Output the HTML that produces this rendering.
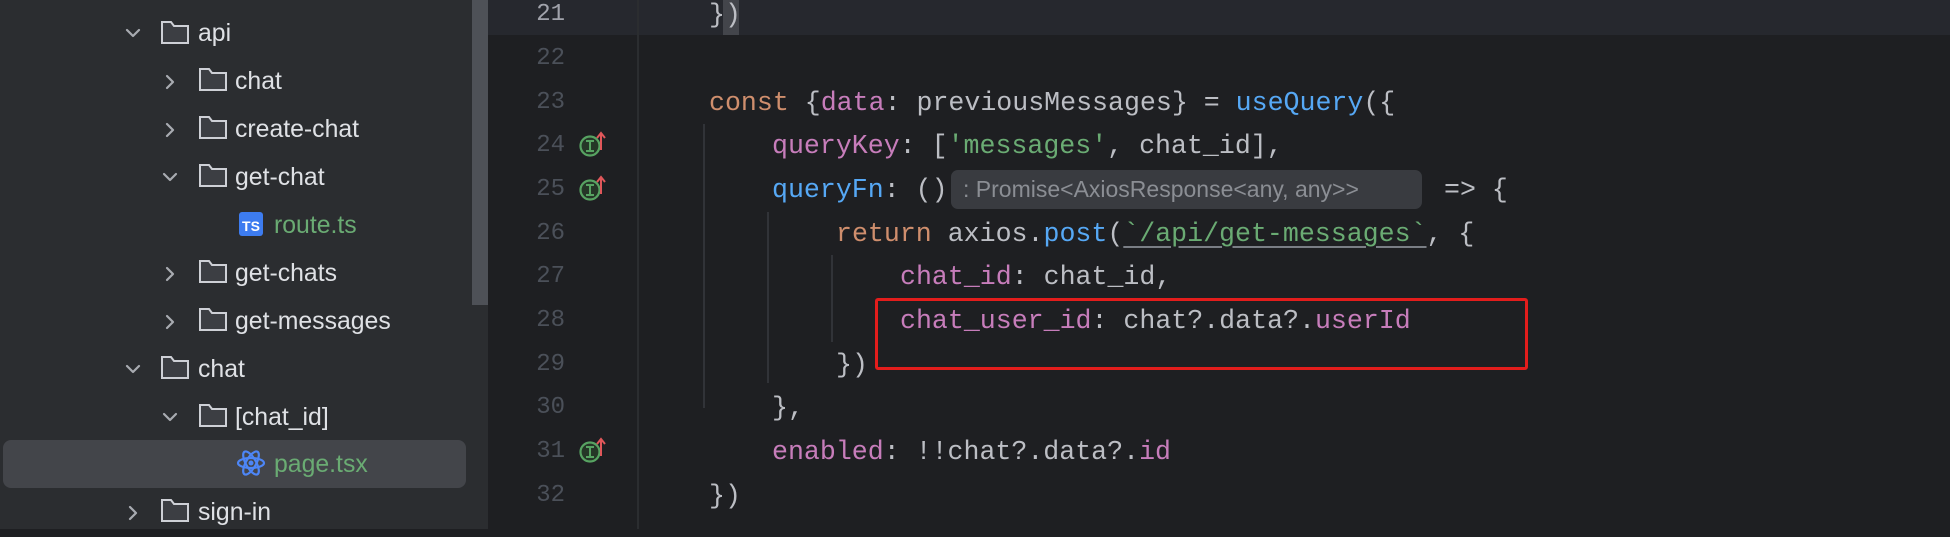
<!DOCTYPE html>
<html><head><meta charset="utf-8"><style>
*{margin:0;padding:0;box-sizing:border-box}
body{width:1950px;height:529px;overflow:hidden;background:#1e1f22;position:relative;font-family:"Liberation Sans",sans-serif}
#side{position:absolute;left:0;top:0;width:472px;height:529px;background:#2b2d30}
#sb{position:absolute;left:472px;top:0;width:16px;height:529px;background:#2b2d30}
#thumb{position:absolute;left:472px;top:0;width:16px;height:305px;background:#4e5157}
.sel{position:absolute;left:3px;top:440px;width:463px;height:48px;background:#43454a;border-radius:8px}
.it{position:absolute;font-size:24.8px;color:#dfe1e5;line-height:48px;height:48px;white-space:pre}
.g{color:#6aab73}
.ic{position:absolute}
#hl{position:absolute;left:488px;top:0;width:1462px;height:35px;background:#26282e}
#gdiv{position:absolute;left:637px;top:0;width:2px;height:529px;background:#2b2d30}
.ln{position:absolute;left:520px;width:45px;text-align:right;font-family:"Liberation Mono",monospace;font-size:24px;color:#4b5059;line-height:44px;height:44px}
.cl{position:absolute;font-family:"Liberation Mono",monospace;font-size:26.6px;color:#bcbec4;line-height:44px;height:44px;white-space:pre}
.k{color:#cf8e6d}.p{color:#c77dbb}.f{color:#56a8f5}.s{color:#6aab73}
.u{text-decoration:underline;text-decoration-color:#7a7e85;text-underline-offset:5px}
.guide{position:absolute;width:2px;background:#313338}
#hint{position:absolute;left:951px;top:170px;width:471px;height:39px;background:#393b40;border-radius:7px;color:#8b8e94;font-size:23px;line-height:39px;padding-left:12px;white-space:pre}
#red{position:absolute;left:875px;top:298px;width:653px;height:72px;border:3px solid #e31d1c;border-radius:3px}
</style></head><body>
<div id="side"></div>
<div class="sel"></div>
<div id="sb"></div><div id="thumb"></div>

<svg class="ic" style="left:0;top:0" width="472" height="529">
<g fill="none" stroke="#a8abb1" stroke-width="2.2" stroke-linecap="round" stroke-linejoin="round">
<path d="M127 30 l6 6 l6 -6"/>
<path d="M167 76 l6 6 l-6 6"/>
<path d="M167 124 l6 6 l-6 6"/>
<path d="M164 174 l6 6 l6 -6"/>
<path d="M167 268 l6 6 l-6 6"/>
<path d="M167 316 l6 6 l-6 6"/>
<path d="M127 366 l6 6 l6 -6"/>
<path d="M164 414 l6 6 l6 -6"/>
<path d="M130 507 l6 6 l-6 6"/>
</g>
<g fill="#3c3e43" stroke="#ced0d6" stroke-width="2">
<path d="M162 22 h9 l3 4 h14 v17 h-26 z"/>
<path d="M200 69 h9 l3 4 h14 v17 h-26 z"/>
<path d="M200 117 h9 l3 4 h14 v17 h-26 z"/>
<path d="M200 165 h9 l3 4 h14 v17 h-26 z"/>
<path d="M200 261 h9 l3 4 h14 v17 h-26 z"/>
<path d="M200 309 h9 l3 4 h14 v17 h-26 z"/>
<path d="M162 357 h9 l3 4 h14 v17 h-26 z"/>
<path d="M200 405 h9 l3 4 h14 v17 h-26 z"/>
<path d="M162 500 h9 l3 4 h14 v17 h-26 z"/>
</g>
<rect x="239" y="212" width="24" height="24" rx="3" fill="#3d7cf0"/>
<text x="251" y="231" font-family="Liberation Sans" font-weight="bold" font-size="14" fill="#fff" text-anchor="middle">TS</text>
<g fill="none" stroke="#4d86f7" stroke-width="2.2">
<ellipse cx="251" cy="463" rx="13" ry="5"/>
<ellipse cx="251" cy="463" rx="13" ry="5" transform="rotate(60 251 463)"/>
<ellipse cx="251" cy="463" rx="13" ry="5" transform="rotate(-60 251 463)"/>
</g>
<circle cx="251" cy="463" r="2.5" fill="#4d86f7"/>
</svg>

<div class="it" style="left:198px;top:10px">api</div>
<div class="it" style="left:235px;top:58px">chat</div>
<div class="it" style="left:235px;top:106px">create-chat</div>
<div class="it" style="left:235px;top:154px">get-chat</div>
<div class="it g" style="left:274px;top:202px">route.ts</div>
<div class="it" style="left:235px;top:250px">get-chats</div>
<div class="it" style="left:235px;top:298px">get-messages</div>
<div class="it" style="left:198px;top:346px">chat</div>
<div class="it" style="left:235px;top:394px">[chat_id]</div>
<div class="it g" style="left:274px;top:441px">page.tsx</div>
<div class="it" style="left:198px;top:489px">sign-in</div>

<div id="hl"></div>
<div id="gdiv"></div>
<div style="position:absolute;left:723px;top:0;width:16px;height:35px;background:#43454b"></div>

<div class="ln" style="top:-7px;color:#a1a3ab">21</div>
<div class="ln" style="top:37px">22</div>
<div class="ln" style="top:81px">23</div>
<div class="ln" style="top:124px">24</div>
<div class="ln" style="top:168px">25</div>
<div class="ln" style="top:212px">26</div>
<div class="ln" style="top:255px">27</div>
<div class="ln" style="top:299px">28</div>
<div class="ln" style="top:343px">29</div>
<div class="ln" style="top:386px">30</div>
<div class="ln" style="top:430px">31</div>
<div class="ln" style="top:474px">32</div>

<svg class="ic" style="left:570px;top:0" width="50" height="529">
<g id="ii">
<circle cx="20" cy="146" r="9.5" fill="#253627" stroke="#57a362" stroke-width="2.2"/>
<path d="M16 141 h8 M16 151 h8 M20 141 v10" stroke="#57a362" stroke-width="2"/>
<path d="M31 150 v-16 M27 138 l4 -5 l4 5" fill="none" stroke="#e0575a" stroke-width="2"/>
</g>
<use href="#ii" y="44"/>
<use href="#ii" y="306"/>
</svg>

<div class="guide" style="left:703px;top:124px;height:284px"></div>
<div class="guide" style="left:767px;top:212px;height:171px"></div>
<div class="guide" style="left:831px;top:255px;height:87px"></div>

<div class="cl" style="left:709px;top:-7px">})</div>
<div class="cl" style="left:709px;top:81px"><span class="k">const</span> {<span class="p">data</span>: previousMessages} = <span class="f">useQuery</span>({</div>
<div class="cl" style="left:772px;top:124px"><span class="p">queryKey</span>: [<span class="s">'messages'</span>, chat_id],</div>
<div class="cl" style="left:772px;top:168px"><span class="f">queryFn</span>: ()</div>
<div id="hint">: Promise&lt;AxiosResponse&lt;any, any&gt;&gt;</div>
<div class="cl" style="left:1444px;top:168px">=&gt; {</div>
<div class="cl" style="left:836px;top:212px"><span class="k">return</span> axios.<span class="f">post</span>(<span class="s u">`/api/get-messages`</span>, {</div>
<div class="cl" style="left:900px;top:255px"><span class="p">chat_id</span>: chat_id,</div>
<div class="cl" style="left:900px;top:299px"><span class="p">chat_user_id</span>: chat?.data?.<span class="p">userId</span></div>
<div class="cl" style="left:836px;top:343px">})</div>
<div class="cl" style="left:772px;top:386px">},</div>
<div class="cl" style="left:772px;top:430px"><span class="p">enabled</span>: !!chat?.data?.<span class="p">id</span></div>
<div class="cl" style="left:709px;top:474px">})</div>

<div id="red"></div>
</body></html>
